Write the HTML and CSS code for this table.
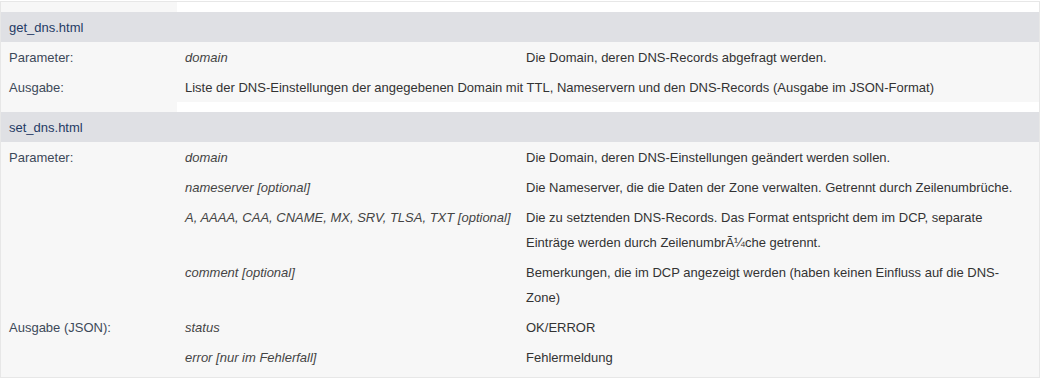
FILE: index.html
```html
<!DOCTYPE html>
<html lang="de">
<head>
<meta charset="utf-8">
<title>API</title>
<link rel="stylesheet" href="styles.css">
</head>
<body>
<div class="box">
<table class="api">
  <colgroup><col class="c1"><col class="c2"><col class="c3"></colgroup>
  <tr class="gap"><td class="gap-l"></td><td colspan="2" class="gap-r"></td></tr>
  <tr class="head"><td colspan="3">get_dns.html</td></tr>
  <tr><td class="lbl">Parameter:</td><td class="arg">domain</td><td>Die Domain, deren DNS-Records abgefragt werden.</td></tr>
  <tr><td class="lbl">Ausgabe:</td><td colspan="2">Liste der DNS-Einstellungen der angegebenen Domain mit TTL, Nameservern und den DNS-Records (Ausgabe im JSON-Format)</td></tr>
  <tr class="gap"><td class="gap-l"></td><td colspan="2" class="gap-r"></td></tr>
  <tr class="head"><td colspan="3">set_dns.html</td></tr>
  <tr><td class="lbl">Parameter:</td><td class="arg">domain</td><td>Die Domain, deren DNS-Einstellungen geändert werden sollen.</td></tr>
  <tr><td class="lbl"></td><td class="arg">nameserver [optional]</td><td>Die Nameserver, die die Daten der Zone verwalten. Getrennt durch Zeilenumbrüche.</td></tr>
  <tr><td class="lbl"></td><td class="arg">A, AAAA, CAA, CNAME, MX, SRV, TLSA, TXT [optional]</td><td>Die zu setztenden DNS-Records. Das Format entspricht dem im DCP, separate Einträge werden durch ZeilenumbrÃ¼che getrennt.</td></tr>
  <tr><td class="lbl"></td><td class="arg">comment [optional]</td><td>Bemerkungen, die im DCP angezeigt werden (haben keinen Einfluss auf die DNS-Zone)</td></tr>
  <tr><td class="lbl">Ausgabe (JSON):</td><td class="arg">status</td><td>OK/ERROR</td></tr>
  <tr><td class="lbl"></td><td class="arg">error [nur im Fehlerfall]</td><td>Fehlermeldung</td></tr>
</table>
</div>
</body>
</html>
```

FILE: styles.css
```css
html, body {
  margin: 0;
  padding: 0;
  background: #ffffff;
}

body {
  padding-top: 1px;
  font-family: "Liberation Sans", Arial, Helvetica, sans-serif;
  font-size: 13px;
  color: #333333;
}

.box {
  box-sizing: border-box;
  width: 1040px;
  border: 1px solid #e7e7e7;
  background: #f7f7f7;
  padding-bottom: 5px;
}

.api {
  width: 100%;
  border-collapse: collapse;
  border-spacing: 0;
  table-layout: fixed;
}

.c1 { width: 176px; }
.c2 { width: 341px; }

.api td {
  padding: 3px 8px 2px 8px;
  line-height: 25px;
  vertical-align: top;
}

.api .gap td {
  padding: 0;
  height: 10px;
  line-height: 10px;
}

.gap-l { background: #f7f7f7; }
.gap-r { background: #ffffff; }

.api .head td {
  background: #dfe0e4;
  color: #1f3b64;
  padding: 1px 8px 0 8px;
  height: 29px;
  line-height: 29px;
  vertical-align: middle;
}

.lbl {
  color: #3d4959;
}

.arg {
  font-style: italic;
  color: #444444;
  white-space: nowrap;
}
```
